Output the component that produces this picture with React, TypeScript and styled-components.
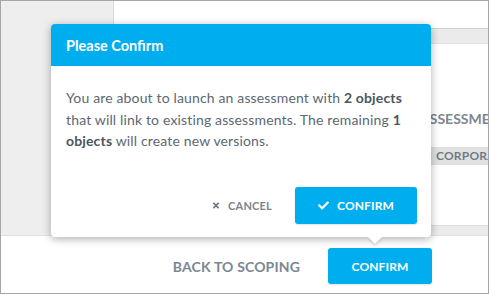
import React from "react";
import styled, { createGlobalStyle } from "styled-components";
import { FaCheck, FaTimes } from "react-icons/fa";

const Global = createGlobalStyle`
  html, body { margin: 0; padding: 0; background: #fff; }
  body { font-family: Lato, "Noto Sans", sans-serif; }
  * { box-sizing: border-box; }
`;

const Frame = styled.div`
  position: relative;
  width: 489px;
  height: 294px;
  border: 1px solid #a6a6a6;
  display: flex;
  flex-direction: column;
  background: #fff;
  overflow: hidden;
`;

const Workspace = styled.div`
  display: flex;
  height: 235px;
  border-bottom: 1px solid #dde1e5;
`;

const Sidebar = styled.aside`
  flex: 0 0 113px;
  background: #eeeeee;
  border-right: 1px solid #dcdcdc;
`;

const Main = styled.main`
  flex: 1;
  min-width: 0;
  overflow: hidden;
  display: flex;
  flex-direction: column;
  background: #ebebeb;
`;

const PageHeader = styled.header`
  height: 28px;
  background: #fff;
  border-bottom: 1px solid #d2d2d2;
`;

const Card = styled.section`
  flex: 1;
  margin: 14px 0 9px;
  background: #fff;
  border-top: 1px solid #e2e2e2;
  border-bottom: 1px solid #dcdcdc;
  padding: 65px 0 0 306px;
  display: flex;
  flex-direction: column;
  align-items: flex-start;
`;

const ColumnTitle = styled.div`
  font-size: 14px;
  line-height: 20px;
  font-weight: 700;
  color: #7d8790;
  white-space: nowrap;
  text-transform: uppercase;
`;

const Tag = styled.span`
  margin: 18px 0 0 10px;
  padding: 0 6px;
  height: 18px;
  line-height: 18px;
  background: #e1e1e1;
  color: #6f7b86;
  font-size: 12px;
  font-weight: 700;
  white-space: nowrap;
  letter-spacing: 0.2px;
`;

const BottomBar = styled.footer`
  flex: 1;
  display: flex;
  justify-content: flex-end;
  align-items: center;
  gap: 28px;
  padding: 3px 56px 0 0;
`;

const LinkButton = styled.button`
  border: 0;
  background: none;
  padding: 0;
  font-family: inherit;
  font-size: 14px;
  font-weight: 700;
  color: #7b8791;
  letter-spacing: 0.15px;
`;

const PrimaryButton = styled.button<{ $w: number; $h: number }>`
  width: ${(p) => p.$w}px;
  height: ${(p) => p.$h}px;
  border: 0;
  border-radius: 3px;
  background: #00aeef;
  color: #fff;
  font-family: inherit;
  font-size: 12px;
  font-weight: 700;
  letter-spacing: 0.1px;
  display: flex;
  align-items: center;
  justify-content: center;
  gap: 8px;
  box-shadow: 0 1px 2px rgba(0, 0, 0, 0.12);
  svg { width: 11px; height: 11px; }
`;

const Dialog = styled.div`
  position: absolute;
  left: 50px;
  top: 23px;
  width: 380px;
  height: 213px;
  background: #fff;
  border-radius: 4px;
  box-shadow: 0 2px 9px rgba(0, 0, 0, 0.32);
  display: flex;
  flex-direction: column;

  &::after {
    content: "";
    position: absolute;
    left: 317px;
    bottom: -7px;
    border-left: 7px solid transparent;
    border-right: 7px solid transparent;
    border-top: 7px solid #fff;
    filter: drop-shadow(0 2px 1px rgba(0, 0, 0, 0.15));
  }
`;

const DialogHeader = styled.div`
  height: 42px;
  background: #00aeef;
  border-radius: 4px 4px 0 0;
  padding: 0 15px;
  display: flex;
  align-items: center;
  color: #fff;
  font-size: 14.5px;
  font-weight: 700;
`;

const DialogBody = styled.p`
  margin: 0;
  padding: 21px 15px 0;
  font-size: 14px;
  line-height: 21.5px;
  letter-spacing: 0.15px;
  color: #5d6872;
  b { color: #4b5660; font-weight: 700; }
`;

const DialogFooter = styled.div`
  margin-top: auto;
  padding: 0 14px 13px;
  display: flex;
  justify-content: flex-end;
  align-items: center;
  gap: 23px;
`;

const CancelButton = styled.button`
  border: 0;
  background: none;
  padding: 0;
  display: flex;
  align-items: center;
  gap: 8px;
  font-family: inherit;
  font-size: 11px;
  font-weight: 700;
  color: #7b858e;
  letter-spacing: 0.2px;
  svg { width: 8px; height: 9px; color: #6f7880; }
`;

export default function App() {
  return (
    <>
      <Global />
      <Frame>
        <Workspace>
          <Sidebar />
          <Main>
            <PageHeader />
            <Card>
              <ColumnTitle>Assessment Name</ColumnTitle>
              <Tag>CORPORATE</Tag>
            </Card>
          </Main>
        </Workspace>
        <BottomBar>
          <LinkButton>BACK TO SCOPING</LinkButton>
          <PrimaryButton $w={104} $h={36}>CONFIRM</PrimaryButton>
        </BottomBar>
        <Dialog role="dialog">
          <DialogHeader>Please Confirm</DialogHeader>
          <DialogBody>
            You are about to launch an assessment with <b>2 objects</b>
            <br />
            that will link to existing assessments. The remaining <b>1</b>
            <br />
            <b>objects</b> will create new versions.
          </DialogBody>
          <DialogFooter>
            <CancelButton>
              <FaTimes />
              CANCEL
            </CancelButton>
            <PrimaryButton $w={122} $h={37}>
              <FaCheck />
              CONFIRM
            </PrimaryButton>
          </DialogFooter>
        </Dialog>
      </Frame>
    </>
  );
}
